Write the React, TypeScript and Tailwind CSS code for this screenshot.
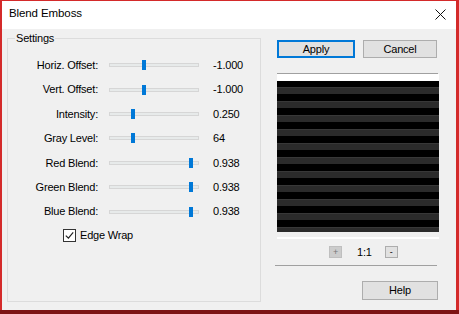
import React from 'react';

interface SliderRow {
  label: string;
  value: string;
  thumb: number;
}

const rows: SliderRow[] = [
  { label: 'Horiz. Offset:', value: '-1.000', thumb: 33 },
  { label: 'Vert. Offset:', value: '-1.000', thumb: 33 },
  { label: 'Intensity:', value: '0.250', thumb: 22 },
  { label: 'Gray Level:', value: '64', thumb: 22 },
  { label: 'Red Blend:', value: '0.938', thumb: 80 },
  { label: 'Green Blend:', value: '0.938', thumb: 80 },
  { label: 'Blue Blend:', value: '0.938', thumb: 80 },
];

const stripes = Array.from({ length: 22 }, (_, i) => i);

const App: React.FC = () => {
  return (
    <div
      className="w-[459px] h-[314px] flex flex-col bg-[#d42a2a] text-[11px] text-black tracking-[-0.2px] overflow-hidden"
      style={{ fontFamily: '"Liberation Sans", Arial, sans-serif' }}
    >
      <div className="flex-1 flex flex-col ml-[2px] mr-[3px] mt-[1px] bg-[#f0f0f0]">
        {/* Title bar */}
        <div className="h-[28px] bg-white flex items-center justify-between pl-[7px] pr-[10px]">
          <span className="text-[11.5px] tracking-[-0.1px] pb-[2px]">Blend Emboss</span>
          <svg className="w-[11px] h-[11px] mb-[2px]" viewBox="0 0 11 11" fill="none" stroke="#111" strokeWidth={1}>
            <path d="M0.5 0.5L10.5 10.5M10.5 0.5L0.5 10.5" />
          </svg>
        </div>

        <div className="flex flex-1">
          {/* Settings group */}
          <div className="relative ml-[5px] mt-[9px] w-[254px] h-[264px] border border-[#dcdcdc]">
            <span className="absolute -top-[8px] left-[7px] px-[1px] bg-[#f0f0f0] leading-[14px]">Settings</span>
            <div className="pt-[14px] flex flex-col">
              {rows.map((row) => (
                <div key={row.label} className="h-[24.4px] flex items-center">
                  <span className="w-[90px] text-right">{row.label}</span>
                  <div className="relative ml-[11px] w-[90px] h-[10px] flex items-center">
                    <div className="w-full h-[4px] bg-[#e7eaea] border border-[#d6d6d6]" />
                    <div
                      className="absolute top-0 w-[4px] h-[10px] bg-[#0078d7]"
                      style={{ left: row.thumb }}
                    />
                  </div>
                  <span className="ml-[14px]">{row.value}</span>
                </div>
              ))}
              <div className="mt-[5px] pl-[55px] flex items-center h-[13px]">
                <div className="w-[13px] h-[13px] bg-white border border-[#333] flex items-center justify-center">
                  <svg className="w-[9px] h-[9px]" viewBox="0 0 9 9" fill="none" stroke="#222" strokeWidth={1.2}>
                    <path d="M0.8 4.6L3.4 7.2L8.2 1.4" />
                  </svg>
                </div>
                <span className="ml-[4px]">Edge Wrap</span>
              </div>
            </div>
          </div>

          {/* Right column */}
          <div className="ml-[16px] w-[162px] flex flex-col pt-[11px]">
            <div className="flex">
              <button className="w-[78px] h-[18px] bg-[#e1e1e1] border-2 border-[#0078d7] flex items-center justify-center">
                Apply
              </button>
              <button className="ml-[8px] w-[74px] h-[18px] bg-[#e1e1e1] border border-[#adadad] flex items-center justify-center">
                Cancel
              </button>
            </div>

            <div className="mt-[15px] h-[1px] w-[161px] bg-[#a0a0a0]" />
            <div className="bg-white pt-[7px]">
              <div className="h-[151px] bg-black overflow-hidden flex flex-col">
                <div className="h-[6px] shrink-0 bg-black" />
                {stripes.map((i) => (
                  <div
                    key={i}
                    className={`h-[7px] shrink-0 ${i % 2 === 0 ? 'bg-[#2b2b2b] border-t border-[#383838]' : 'bg-black'}`}
                  />
                ))}
              </div>
            </div>
            <div className="h-[5px]" />
            <div className="h-[2px] bg-white" />

            <div className="mt-[7px] h-[12px] flex items-center pl-[52px]">
              <div className="w-[13px] h-[12px] bg-[#cccccc] border border-[#bfbfbf] flex items-center justify-center text-[9px] text-[#777] leading-none">
                +
              </div>
              <span className="ml-[15px]">1:1</span>
              <div className="ml-[13px] w-[13px] h-[12px] bg-[#e1e1e1] border border-[#adadad] flex items-center justify-center text-[9px] leading-none">
                -
              </div>
            </div>

            <div className="mt-[7px] -ml-[2px] h-[1px] w-[162px] bg-[#a0a0a0]" />

            <button className="mt-[15px] ml-[85px] w-[76px] h-[19px] bg-[#e1e1e1] border border-[#adadad] flex items-center justify-center">
              Help
            </button>
          </div>
        </div>
      </div>
      <div className="h-[4px] bg-[#7d1414]" />
    </div>
  );
};

export default App;
